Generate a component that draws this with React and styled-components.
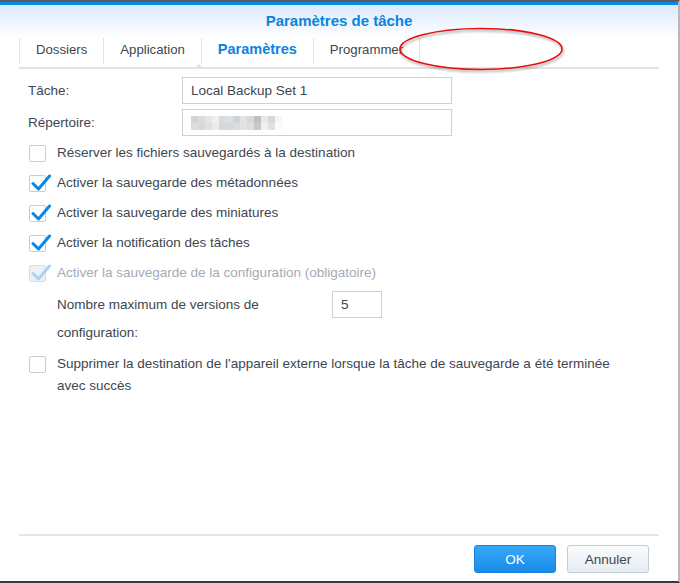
import React from "react";
import styled, { createGlobalStyle, css } from "styled-components";

const GlobalStyle = createGlobalStyle`
  html, body {
    margin: 0;
    padding: 0;
    background: #ffffff;
  }
  body {
    font-family: "Liberation Sans", Arial, sans-serif;
    font-size: 13.5px;
    color: #3d4650;
  }
`;

const Window = styled.div`
  position: relative;
  box-sizing: border-box;
  width: 680px;
  height: 583px;
  border-top: 2px solid #5a5a5a;
  border-bottom: 2px solid #3a3a3a;
  border-right: 2px solid #b8b8b8;
  background: #fff;
  display: flex;
  flex-direction: column;
`;

const Header = styled.div`
  border-top: 3px solid #0c86e6;
  background: linear-gradient(to bottom, #d9eafb 0%, #f3f8fe 22px, #ffffff 34px);
  padding: 0 19px;
`;

const Title = styled.div`
  text-align: center;
  font-weight: bold;
  font-size: 15px;
  color: #0a84df;
  height: 31px;
  line-height: 32px;
`;

const TabBar = styled.div`
  position: relative;
  display: flex;
  height: 31px;
  border-bottom: 2px solid #e3e3e3;
`;

const Tab = styled.div`
  box-sizing: border-box;
  height: 26px;
  margin-top: 2px;
  line-height: 23px;
  padding: 0 16px;
  border-left: 1px solid #dfe4ea;
  font-size: 13.2px;
  color: #3d4650;
  ${(p) =>
    p.$active &&
    css`
      font-weight: bold;
      font-size: 14.5px;
      color: #0a84df;
    `}
  ${(p) =>
    p.$last &&
    css`
      border-right: 1px solid #dfe4ea;
    `}
`;

const Notch = styled.div`
  position: absolute;
  left: 175px;
  bottom: -2px;
  width: 0;
  height: 0;
  border-left: 5px solid transparent;
  border-right: 5px solid transparent;
  border-bottom: 5px solid #e3e3e3;
`;

const Body = styled.div`
  flex: 1;
  padding: 8px 0 0 28px;
`;

const FieldRow = styled.div`
  display: flex;
  align-items: center;
  margin-bottom: 5px;
`;

const FieldLabel = styled.div`
  width: 154px;
`;

const TextBox = styled.div`
  box-sizing: border-box;
  width: ${(p) => p.$width || 270}px;
  height: 27px;
  border: 1px solid #c8d2dd;
  padding: 0 8px;
  line-height: 25px;
  display: flex;
  align-items: center;
`;

const Blur = styled.div`
  display: flex;
  flex-direction: column;
`;

const BlurRow = styled.div`
  display: flex;
`;

const Pixel = styled.span`
  width: 7px;
  height: 7px;
  background: ${(p) => p.$c};
`;

const Spacer = styled.div`
  height: 3px;
`;

const CheckRow = styled.div`
  display: flex;
  align-items: flex-start;
  margin-left: 1px;
  min-height: 30px;
  margin-top: ${(p) => (p.$gap ? 8 : 0)}px;
  color: ${(p) => (p.$disabled ? "#a3abb4" : "#3d4650")};
`;

const Box = styled.div`
  position: relative;
  flex: none;
  box-sizing: border-box;
  width: 17px;
  height: 17px;
  margin-top: 1px;
  margin-right: 11px;
  border: 1px solid ${(p) => (p.$disabled ? "#d8dee5" : "#c5cdd6")};
  border-radius: 2px;
  background: ${(p) => (p.$disabled ? "#eef2f6" : "#fff")};
`;

const Tick = styled.svg`
  position: absolute;
  left: 1px;
  top: -4px;
`;

const CheckText = styled.div`
  line-height: 22px;
  margin-top: -2px;
  max-width: 570px;
`;

const SubRow = styled.div`
  display: flex;
  align-items: flex-start;
  padding-left: 29px;
  margin-top: -3px;
  margin-bottom: 4px;
`;

const SubLabel = styled.div`
  width: 275px;
  line-height: 28px;
`;

const Footer = styled.div`
  margin: 0 19px;
  border-top: 2px solid #e6e6e6;
  padding: 9px 10px 8px 0;
  display: flex;
  justify-content: flex-end;
  gap: 11px;
`;

const Button = styled.button`
  box-sizing: border-box;
  width: 82px;
  height: 28px;
  border-radius: 3px;
  font-family: "Liberation Sans", Arial, sans-serif;
  font-size: 13.5px;
  cursor: pointer;
  ${(p) =>
    p.$primary
      ? css`
          border: 1px solid #1a82dc;
          color: #fff;
          background: linear-gradient(to bottom, #36a9f8, #1a8be9);
        `
      : css`
          border: 1px solid #c3cdd8;
          color: #3d4650;
          background: linear-gradient(to bottom, #f9fbfc, #e8edf2);
        `}
`;

const Annotation = styled.svg`
  position: absolute;
  left: 396px;
  top: 24px;
  pointer-events: none;
`;

const pixels = [
  ["#d4d4d4", "#dcdcdc", "#e4e6e8", "#f0f0f0", "#d8dadc", "#dcdee0", "#d0d4d8", "#e6e2de", "#d8d8d8", "#c0c0c0", "#e8e8e8", "#d8d8d8", "#f6f6f6"],
  ["#dcdcdc", "#d8d8d8", "#e0e0e0", "#ececec", "#d6d8da", "#d4d8dc", "#dadcde", "#e2e2e2", "#dedede", "#c8c8c8", "#f0f0f0", "#e0e0e0", "#fafafa"],
];

function Check({ checked, disabled, gap, children }) {
  return (
    <CheckRow $disabled={disabled} $gap={gap}>
      <Box $disabled={disabled}>
        {checked && (
          <Tick width="20" height="20" viewBox="0 0 20 20">
            <path
              d="M2 11.5 L7.5 17 L18.5 4"
              fill="none"
              stroke={disabled ? "#a9d4f5" : "#0a86e4"}
              strokeWidth="3"
              strokeLinecap="round"
              strokeLinejoin="round"
            />
          </Tick>
        )}
      </Box>
      <CheckText>{children}</CheckText>
    </CheckRow>
  );
}

export default function App() {
  const tabs = ["Dossiers", "Application", "Paramètres", "Programmer"];
  return (
    <>
      <GlobalStyle />
      <Window>
        <Header>
          <Title>Paramètres de tâche</Title>
          <TabBar>
            {tabs.map((t, i) => (
              <Tab key={t} $active={i === 2} $last={i === tabs.length - 1}>
                {t}
              </Tab>
            ))}
            <Notch />
          </TabBar>
        </Header>
        <Body>
          <FieldRow>
            <FieldLabel>Tâche:</FieldLabel>
            <TextBox>Local Backup Set 1</TextBox>
          </FieldRow>
          <FieldRow>
            <FieldLabel>Répertoire:</FieldLabel>
            <TextBox>
              <Blur>
                {pixels.map((row, r) => (
                  <BlurRow key={r}>
                    {row.map((c, i) => (
                      <Pixel key={i} $c={c} />
                    ))}
                  </BlurRow>
                ))}
              </Blur>
            </TextBox>
          </FieldRow>
          <Spacer />
          <Check>Réserver les fichiers sauvegardés à la destination</Check>
          <Check checked>Activer la sauvegarde des métadonnées</Check>
          <Check checked>Activer la sauvegarde des miniatures</Check>
          <Check checked>Activer la notification des tâches</Check>
          <Check checked disabled>
            Activer la sauvegarde de la configuration (obligatoire)
          </Check>
          <SubRow>
            <SubLabel>Nombre maximum de versions de configuration:</SubLabel>
            <TextBox $width={50}>5</TextBox>
          </SubRow>
          <Check gap>
            Supprimer la destination de l'appareil externe lorsque la tâche de sauvegarde a été terminée avec succès
          </Check>
        </Body>
        <Footer>
          <Button $primary>OK</Button>
          <Button>Annuler</Button>
        </Footer>
        <Annotation width="172" height="50" viewBox="0 0 172 50">
          <defs>
            <filter id="sh" x="-10%" y="-20%" width="120%" height="150%">
              <feDropShadow dx="1" dy="2" stdDeviation="1.2" floodColor="#000" floodOpacity="0.35" />
            </filter>
          </defs>
          <ellipse cx="85" cy="23" rx="81" ry="20.5" fill="none" stroke="#e8100f" strokeWidth="1.6" filter="url(#sh)" />
        </Annotation>
      </Window>
    </>
  );
}
